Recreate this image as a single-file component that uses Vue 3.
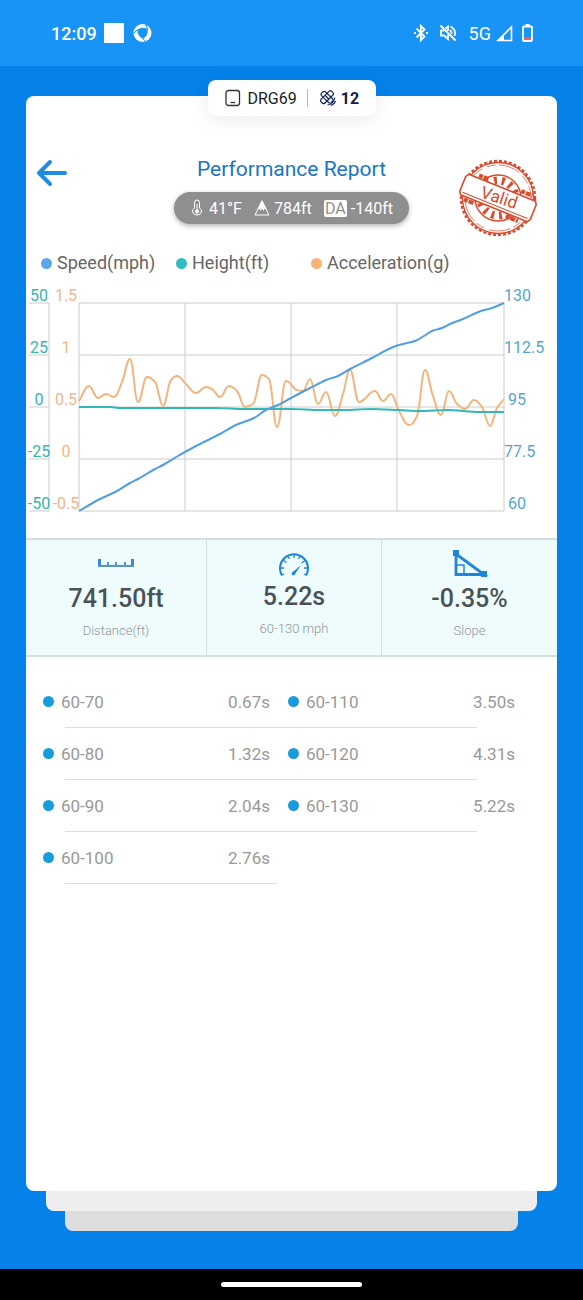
<script setup>
const legend = [
  { label: 'Speed(mph)', tone: 'speed' },
  { label: 'Height(ft)', tone: 'height' },
  { label: 'Acceleration(g)', tone: 'accel' },
]

const splits = [
  ['60-70', '0.67s'],
  ['60-80', '1.32s'],
  ['60-90', '2.04s'],
  ['60-100', '2.76s'],
  ['60-110', '3.50s'],
  ['60-120', '4.31s'],
  ['60-130', '5.22s'],
]

const rows = [
  { y: 303, height: '50', accel: '1.5', speed: '130', x: 504 },
  { y: 355, height: '25', accel: '1', speed: '112.5', x: 504 },
  { y: 407, height: '0', accel: '0.5', speed: '95', x: 508 },
  { y: 459, height: '-25', accel: '0', speed: '77.5', x: 504 },
  { y: 511, height: '-50', accel: '-0.5', speed: '60', x: 508 },
]
const columns = [79, 185, 291, 397, 504]

const speed = [[79, 511], [98, 500], [117, 491], [130, 483], [138, 479], [155, 469], [163, 465], [178, 456], [185, 452], [200, 444], [220, 434], [236, 425], [254, 418], [266, 410], [278, 405], [291, 398], [310, 388], [318, 384], [326, 380], [338, 376], [350, 369], [372, 358], [391, 348], [399, 345], [415, 341], [424, 336], [432, 331], [442, 328], [450, 324], [463, 319], [481, 311], [492, 308], [504, 303]]
const altitude = [[79, 407], [110, 407], [120, 408], [180, 408], [215, 408], [245, 409], [291, 409], [320, 410], [345, 410], [370, 409], [399, 410], [420, 411], [447, 410], [480, 412], [504, 412]]
const accel = [[79, 401], [89, 386], [98, 398], [106, 394], [114, 397], [122, 382], [130, 359], [138, 402], [147, 377], [155, 382], [163, 406], [171, 380], [177, 376], [186, 384], [196, 393], [206, 387], [213, 390], [220, 397], [229, 386], [237, 391], [245, 407], [253, 404], [262, 375], [269, 379], [277, 427], [286, 381], [297, 390], [303, 391], [310, 379], [318, 404], [326, 392], [335, 416], [343, 394], [350, 370], [359, 402], [375, 391], [383, 401], [391, 394], [399, 411], [409, 425], [417, 416], [425, 370], [433, 396], [441, 415], [449, 391], [457, 404], [465, 409], [474, 400], [482, 407], [490, 426], [497, 408], [504, 399]]

// Cubic interpolation with level tangents at each peak and trough.
function curve(points, reach) {
  const slopes = points.slice(1).map((p, i) => (p[1] - points[i][1]) / (p[0] - points[i][0]))
  const tangents = points.map((_, i) => {
    if (i === 0) return slopes[0]
    if (i === points.length - 1) return slopes[i - 1]
    const a = slopes[i - 1]
    const b = slopes[i]
    return a * b <= 0 ? 0 : (2 * a * b) / (a + b)
  })
  let d = `M${points[0]}`
  for (let i = 1; i < points.length; i++) {
    const [x0, y0] = points[i - 1]
    const [x1, y1] = points[i]
    const h = (x1 - x0) * reach
    d += ` C${x0 + h},${y0 + tangents[i - 1] * h} ${x1 - h},${y1 - tangents[i] * h} ${x1},${y1}`
  }
  return d
}
</script>

<template>
  <div class="screen">
    <header class="status">
      <div class="status-side">
        <span class="clock">12:09</span>
        <i class="status-square"></i>
        <svg width="19" height="20" viewBox="0 0 19 20" aria-hidden="true">
          <circle cx="9.5" cy="10" r="9" fill="#fff" />
          <path d="M4.500 6.500Q9.500 3.500 14.800 6Q15.500 12 10 16Q4 13 4.500 6.500Z" fill="#1893f6" />
          <path d="M12.500 1.500L14.800 6M1 10L4.500 6.500M13 18.500L10 16" stroke="#1893f6" fill="none" />
        </svg>
      </div>
      <div class="status-side">
        <svg class="bluetooth" width="16" height="18" viewBox="0 0 16 18" fill="none" stroke="#fff" stroke-width="1.800" aria-hidden="true">
          <path d="M3.500 4.500L11.500 12.500L7.800 16.200V1.800L11.500 5.500L3.500 13.500" />
          <path d="M1 9H3M13 9H15" stroke-width="2" />
        </svg>
        <svg class="mute" width="18" height="18" viewBox="0 0 18 18" fill="none" stroke="#fff" stroke-width="1.800" aria-hidden="true">
          <path d="M1.500 1.500L16.500 16.500" />
          <path d="M5 6.500H2V11.500H5L9 15V10.500M6.500 4.500L9 2.500V7" />
          <path d="M11 6Q13 7.500 12.500 10M11.500 2.500Q17.500 5.500 15.500 12" />
        </svg>
        <span>5G</span>
        <svg class="signal" width="17" height="17" viewBox="0 0 17 17" aria-hidden="true">
          <path d="M15.500 2V15.500H2Z" fill="none" stroke="#fff" stroke-width="1.600" />
          <path d="M1 16L8 9V16Z" fill="#fff" />
        </svg>
        <svg width="11" height="18" viewBox="0 0 11 18" aria-hidden="true">
          <path d="M3.500 0H7.500V2H3.500Z" fill="#fff" />
          <rect x="1" y="2.500" width="9" height="14.500" rx="1" fill="none" stroke="#fff" stroke-width="1.800" />
          <path d="M2 13H9V16H2Z" fill="#e8645a" />
        </svg>
      </div>
    </header>

    <main class="stage">
      <article class="card">
        <div class="tag">
          <svg width="16" height="18" viewBox="0 0 16 18" fill="none" stroke="#333" stroke-width="1.300" aria-hidden="true">
            <rect x="1" y="1.500" width="13.500" height="15" rx="2.500" />
            <path d="M5.500 13.500H10" />
          </svg>
          <span>DRG69</span>
          <i class="tag-rule"></i>
          <svg width="16" height="16" viewBox="0 0 16 16" fill="none" stroke="#14285a" stroke-width="1.200" aria-hidden="true">
            <rect x="-7.500" y="-2.700" width="15" height="5.400" rx="2" transform="translate(7 7.200) rotate(-45)" />
            <path d="M5 9.200L1.500 5.700Q.500 4.500 1.500 3.300L3 1.800Q4.200 .800 5.400 1.800L9 5.300" />
            <path d="M9 5.300L12.800 9Q13.500 10 12.600 11L11 12.600Q10 13.500 9 12.700L5 9.200" />
            <path d="M5 5.300L9 9.200" />
            <path d="M7.500 15Q13.500 14.500 14.800 7.500M11 15.500Q14.500 14.500 15.500 11" />
          </svg>
          <b>12</b>
        </div>

        <div class="head">
          <button class="back" type="button" aria-label="Back">
            <svg width="32" height="28" viewBox="0 0 32 28" fill="none" stroke="#1f8ce0" stroke-width="4" stroke-linecap="round" stroke-linejoin="round" aria-hidden="true">
              <path d="M14 3L3 14L14 25M3 14H29" />
            </svg>
          </button>
          <div class="head-center">
            <h1>Performance Report</h1>
            <div class="weather">
              <span class="reading temp">
                <svg width="12" height="18" viewBox="0 0 12 18" fill="none" stroke="#fff" aria-hidden="true">
                  <path d="M3.500 9V3.500Q3.500 1 6 1Q8.500 1 8.500 3.500V9Q11 10.500 10.500 13Q9.500 16 6 16Q2.500 16 1.500 13Q1 10.500 3.500 9Z" />
                  <path d="M6 5V12" />
                  <circle cx="6" cy="12.500" r="1.600" fill="#fff" />
                </svg>
                41°F
              </span>
              <span class="reading">
                <svg width="16" height="16" viewBox="0 0 16 16" aria-hidden="true">
                  <path d="M1 15L8 1L15 15Z" fill="none" stroke="#fff" />
                  <path d="M8 0L13 10L10.500 8.500L9.500 11L8 8.500L6.500 11L5.500 8.500L3 10Z" fill="#fff" />
                </svg>
                784ft
              </span>
              <span class="reading"><span class="da">DA</span>-140ft</span>
            </div>
          </div>
          <svg class="stamp" width="82" height="82" viewBox="-41 -41 82 82" role="img" aria-label="Valid">
            <g fill="none" stroke="#da4a2c">
              <circle r="37" stroke-width="2.400" stroke-dasharray="3 2" />
              <circle r="35.500" stroke-width="1.400" />
              <circle r="33" stroke-width="0.700" stroke-dasharray="22 5 9 3" />
              <circle r="23" stroke-width="1.500" />
              <circle r="17.500" stroke-width="8" stroke-dasharray="2.800 5" />
              <g transform="rotate(22)">
                <path d="M-26 -14H-15M19 -15H31M-31 14H-20M14 14H27" stroke-width="4" stroke-dasharray="4 1 5 1" />
                <path d="M-36 -11H36L38 -8V8L36 11H-36L-38 8V-8Z" fill="#fff" stroke-width="1.600" stroke-linejoin="round" />
                <path d="M-35 8H35" />
              </g>
            </g>
            <text class="stamp-text" transform="rotate(18)" x="1" y="5" text-anchor="middle">Valid</text>
          </svg>
        </div>

        <ul class="legend">
          <li v-for="item in legend" :key="item.label">
            <i class="dot" :class="item.tone"></i>{{ item.label }}
          </li>
        </ul>

        <svg class="chart" viewBox="26 284 531 236" role="img" aria-label="Speed, height and acceleration">
          <g class="grid-lines">
            <path v-for="row in rows" :key="row.y" :d="`M29 ${row.y}H49M79 ${row.y}H504`" />
            <path v-for="x in columns" :key="x" :d="`M${x} 303V511`" />
            <path d="M49 303V511" />
          </g>
          <path class="line accel-line" :d="curve(accel, 0.42)" />
          <path class="line height-line" :d="curve(altitude, 0.33)" />
          <path class="line speed-line" :d="curve(speed, 0.33)" />
          <g v-for="row in rows" :key="row.y">
            <text class="height-text" x="39" :y="row.y - 2" text-anchor="middle">{{ row.height }}</text>
            <text class="accel-text" x="66" :y="row.y - 2" text-anchor="middle">{{ row.accel }}</text>
            <text class="speed-text" :x="row.x" :y="row.y - 2">{{ row.speed }}</text>
          </g>
        </svg>

        <section class="stats">
          <div class="stat">
            <svg width="38" height="28" viewBox="0 0 38 28" aria-hidden="true">
              <path d="M2.500 9V17M35.500 9V17" stroke="#3d86cf" stroke-width="3" />
              <path d="M1 16H37M11 12V16M19 12V16M28 12V16" stroke="#5b93c4" stroke-width="2" />
            </svg>
            <strong>741.50ft</strong>
            <span>Distance(ft)</span>
          </div>
          <div class="stat raised">
            <svg width="32" height="28" viewBox="0 0 32 28" fill="none" stroke="#1d86d8" aria-hidden="true">
              <path d="M4 25.500A14 14 0 1 1 28 25.500" stroke-width="2" />
              <path d="M2.500 18H6M5.500 10.500L8.500 12.500M10 6L11.500 9M16 5V8M22 6L20.500 9M26.500 11L23.500 13M29.500 18H26M4 25L6 24M28 25L26 24" stroke-width="1.300" />
              <path d="M14 25Q13 22.500 16 21L23 15L18 22.500Q17 26 14 25Z" fill="#1d86d8" stroke="none" />
            </svg>
            <strong>5.22s</strong>
            <span>60-130 mph</span>
          </div>
          <div class="stat">
            <svg width="36" height="28" viewBox="0 0 36 28" fill="none" stroke="#1d86d8" aria-hidden="true">
              <path d="M4 4V24.500H32L4 4" stroke-width="2.800" />
              <path d="M4 15H12V24" stroke-width="1.500" />
              <path d="M1 0H7V6H1ZM29 21H35V27H29Z" fill="#1d86d8" stroke="none" />
            </svg>
            <strong>-0.35%</strong>
            <span>Slope</span>
          </div>
        </section>

        <ul class="splits">
          <li v-for="[range, time] in splits" :key="range">
            <div class="split">
              <i class="dot"></i>
              <span>{{ range }}</span>
              <span class="time">{{ time }}</span>
            </div>
            <hr />
          </li>
        </ul>
      </article>
      <div class="sheet"></div>
      <div class="sheet back-sheet"></div>
    </main>

    <footer class="nav"><i></i></footer>
  </div>
</template>

<style>
body {
  margin: 0;
}
</style>

<style scoped>
.screen {
  display: flex;
  flex-direction: column;
  min-height: 100vh;
  background: #0482ea;
  font-family: Roboto, "Liberation Sans", sans-serif;
}
svg {
  display: block;
  flex: none;
}
ul {
  list-style: none;
  margin: 0;
  padding: 0;
}
.status {
  display: flex;
  justify-content: space-between;
  align-items: center;
  height: 66px;
  padding: 0 50px 0 51px;
  box-sizing: border-box;
  background: #1893f6;
  color: #fff;
  font-size: 18px;
}
.clock {
  font-weight: 500;
}
.status-side {
  display: flex;
  align-items: center;
}
.status-square {
  width: 20px;
  height: 20px;
  margin: 0 9px 0 7px;
  background: #fff;
}
.bluetooth {
  margin-right: 10px;
}
.mute {
  margin-right: 12px;
}
.signal {
  margin: 0 9px 0 5px;
}
.stage {
  flex: 1;
  display: flex;
  flex-direction: column;
  padding: 30px 26px 38px;
}
.card {
  position: relative;
  flex: 1;
  border-radius: 8px;
  background: #fff;
}
.tag {
  position: absolute;
  top: -16px;
  left: 50%;
  transform: translateX(-50%);
  display: flex;
  align-items: center;
  width: 168px;
  height: 36px;
  padding-left: 17px;
  box-sizing: border-box;
  border-radius: 8px;
  background: #fff;
  box-shadow: 0 4px 20px rgba(0, 0, 0, 0.08);
  color: #222;
  font-size: 16px;
}
.tag span {
  margin-left: 7px;
}
.tag b {
  margin-left: 5px;
  color: #14204a;
}
.tag-rule {
  width: 1px;
  height: 18px;
  margin: 0 12px 0 10px;
  background: #bbb;
}
.head {
  display: grid;
  grid-template-columns: 1fr auto 1fr;
  align-items: start;
  padding: 61px 10px 0;
}
.back {
  justify-self: start;
  margin-top: 2px;
  padding: 0;
  border: 0;
  background: none;
}
.head-center {
  display: flex;
  flex-direction: column;
  align-items: center;
  gap: 11px;
}
h1 {
  margin: 0;
  color: #1976c4;
  font-size: 21px;
  line-height: 24px;
  font-weight: 400;
}
.weather {
  display: flex;
  align-items: center;
  justify-content: space-between;
  width: 235px;
  height: 32px;
  padding: 0 16px 0 17px;
  box-sizing: border-box;
  border-radius: 16px;
  background: #8f8f8f;
  box-shadow: 0 2px 5px rgba(0, 0, 0, 0.3);
  color: #fff;
  font-size: 16px;
}
.reading {
  display: flex;
  align-items: center;
  gap: 4px;
}
.reading.temp {
  gap: 6px;
}
.da {
  padding: 0 1px;
  border-radius: 2px;
  background: #fff;
  color: #8f8f8f;
  line-height: 17px;
}
.stamp {
  justify-self: end;
  margin-right: 8px;
}
.stamp-text {
  fill: #da4a2c;
  font-size: 17px;
}
.legend {
  display: grid;
  grid-template-columns: 135px 135px auto;
  margin-top: 12px;
  padding-left: 15px;
  color: #666;
  font-size: 18px;
  line-height: 24px;
}
.legend li {
  display: flex;
  align-items: center;
  gap: 5px;
}
.dot {
  flex: none;
  width: 11px;
  height: 11px;
  border-radius: 50%;
  background: #189cdb;
}
.dot.speed {
  background: #5aa9e6;
}
.dot.height {
  background: #2bbfc0;
}
.dot.accel {
  background: #f7b27a;
}
.chart {
  width: 100%;
  margin-top: 9px;
  font-size: 16px;
}
.grid-lines {
  fill: none;
  stroke: #ccc;
}
.line {
  fill: none;
  stroke-linejoin: round;
}
.accel-line {
  stroke: #f3b57c;
  stroke-width: 2;
}
.height-line {
  stroke: #33b8b8;
  stroke-width: 2;
}
.speed-line {
  stroke: #529fdd;
  stroke-width: 2;
}
.height-text {
  fill: #35b5b0;
}
.accel-text {
  fill: #f0b888;
}
.speed-text {
  fill: #55a5cf;
}
.stats {
  display: grid;
  grid-template-columns: 180fr 175fr 176fr;
  margin-top: 18px;
  border: solid #d3dfe0;
  border-width: 2px 0;
  background: #effcfe;
}
.stat {
  display: flex;
  flex-direction: column;
  align-items: center;
  height: 115px;
  padding-top: 10px;
  box-sizing: border-box;
}
.stat + .stat {
  border-left: 1px solid #d3dfe0;
}
.stat strong {
  margin-top: 7px;
  color: #4a5257;
  font-size: 25px;
  line-height: 28px;
  font-weight: 500;
}
.stat span {
  margin-top: 10px;
  color: #8f9698;
  font-size: 13px;
  line-height: 16px;
  font-weight: 300;
}
.stat.raised strong {
  margin-top: 5px;
}
.splits {
  display: grid;
  grid-template-rows: repeat(4, 52px);
  grid-template-columns: 1fr 1fr;
  grid-auto-flow: column;
  padding: 19px 24px 0 17px;
  color: #999;
  font-size: 17px;
}
.split {
  display: flex;
  align-items: center;
  gap: 7px;
  height: 51px;
  padding-right: 18px;
}
.time {
  margin-left: auto;
}
hr {
  height: 1px;
  margin: 0 11px 0 22px;
  border: 0;
  background: #ddd;
}
li:nth-child(n + 5) hr {
  margin: 0 56px 0 -23px;
}
.sheet {
  height: 20px;
  margin: 0 20px;
  border-radius: 0 0 8px 8px;
  background: #eee;
}
.back-sheet {
  margin: 0 39px;
  background: #ddd;
}
.nav {
  display: flex;
  justify-content: center;
  align-items: center;
  height: 31px;
  background: #000;
}
.nav i {
  width: 141px;
  height: 5px;
  border-radius: 3px;
  background: #fff;
}
</style>
